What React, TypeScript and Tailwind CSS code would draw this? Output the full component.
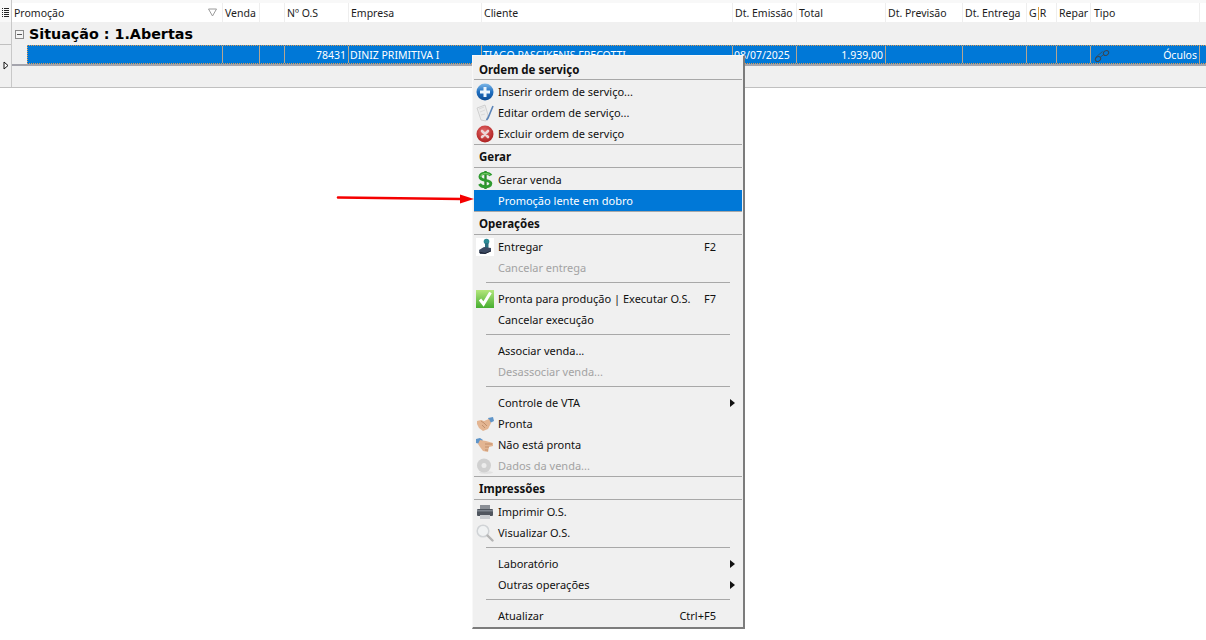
import type { ReactNode } from "react";

const headerCols = "grid grid-cols-[211px_37px_25px_64px_133px_251px_64px_89px_77px_64px_30px_34px_109px_6px]";
const rowCols = "grid grid-cols-[195px_37px_25px_64px_133px_251px_64px_89px_77px_64px_30px_34px_109px_6px]";

function HeaderCell({ children, className = "" }: { children?: ReactNode; className?: string }) {
  return (
    <div className={`flex h-full items-center overflow-hidden whitespace-nowrap border-r border-[#eeeeee] pl-[2px] pt-[2px] ${className}`}>
      {children}
    </div>
  );
}

function DataCell({ children, className = "" }: { children?: ReactNode; className?: string }) {
  return (
    <div className={`flex h-full items-center overflow-hidden whitespace-nowrap border-r border-[#b5a58f] px-[1px] pt-[2px] text-white ${className}`}>
      {children}
    </div>
  );
}

function PlusIcon() {
  return (
    <svg width="18" height="18" viewBox="0 0 18 18">
      <defs>
        <linearGradient id="plusBg" x1="0" y1="0" x2="0" y2="1">
          <stop offset="0" stopColor="#7fb8e8" />
          <stop offset="0.5" stopColor="#1f6fc0" />
          <stop offset="1" stopColor="#0e4c94" />
        </linearGradient>
      </defs>
      <circle cx="9" cy="9" r="8.500" fill="url(#plusBg)" />
      <path d="M7.500 4h3v3.500H14v3h-3.500V14h-3v-3.500H4v-3h3.500z" fill="#eef6fd" />
    </svg>
  );
}

function EditIcon() {
  return (
    <svg width="18" height="18" viewBox="0 0 18 18">
      <path d="M1 4l8-3 3 10-2 6-5-1z" fill="#ececec" stroke="#c8c8c8" strokeWidth="0.8" />
      <path d="M3 5l5-2M4 8l5-2M5 11l4-1" stroke="#d4d4d4" strokeWidth="0.8" />
      <path d="M17 2l-5 12-1.500 2" fill="none" stroke="#5b84b8" strokeWidth="1.600" />
    </svg>
  );
}

function DeleteIcon() {
  return (
    <svg width="18" height="18" viewBox="0 0 18 18">
      <defs>
        <radialGradient id="delBg" cx="0.45" cy="0.35" r="0.7">
          <stop offset="0" stopColor="#e86a6a" />
          <stop offset="1" stopColor="#a81a1a" />
        </radialGradient>
      </defs>
      <circle cx="9" cy="9" r="8.500" fill="url(#delBg)" />
      <path d="M6 6l6 6M12 6l-6 6" stroke="#ecd4d4" strokeWidth="2.600" strokeLinecap="round" />
    </svg>
  );
}

function DollarIcon() {
  return (
    <svg width="18" height="20" viewBox="0 0 18 20">
      <path d="M9.500 1v18" stroke="#2c8a2c" strokeWidth="2.400" />
      <path
        d="M15 5.500c-1-1.500-3-2.300-5.500-2.300-3 0-5.500 1.300-5.500 3.600 0 5 10.800 2.200 10.800 6.700 0 2-2.500 3.300-5.300 3.300-3 0-5-1-6-2.800"
        fill="none"
        stroke="#2f9a30"
        strokeWidth="3"
      />
      <path d="M14.500 5.500c-1-1.200-2.800-1.800-5-1.800-2.600 0-4.800 1-4.800 3" fill="none" stroke="#8fdc7c" strokeWidth="1" />
    </svg>
  );
}

function StampIcon() {
  return (
    <svg width="18" height="18" viewBox="0 0 18 18">
      <rect x="0" y="0" width="18" height="18" fill="#ffffff" />
      <circle cx="10.500" cy="3.500" r="2.800" fill="#2c8a94" />
      <rect x="9" y="5" width="3.500" height="5" fill="#2b6f80" />
      <path d="M3 12l5-3 7 1v3l-6 3H4z" fill="#3c4a62" />
      <path d="M3 14l6 1.500 6-2.500" fill="none" stroke="#1d2434" strokeWidth="1" />
    </svg>
  );
}

function CheckIcon() {
  return (
    <svg width="18" height="18" viewBox="0 0 18 18">
      <defs>
        <linearGradient id="chkBg" x1="0" y1="0" x2="0" y2="1">
          <stop offset="0" stopColor="#b4e67c" />
          <stop offset="1" stopColor="#46ae30" />
        </linearGradient>
      </defs>
      <rect x="0" y="0" width="18" height="18" fill="url(#chkBg)" />
      <path d="M4 9.500l3.500 4.500 7-11.500" fill="none" stroke="#ffffff" strokeWidth="3" />
    </svg>
  );
}

function ShakeIcon() {
  return (
    <svg width="18" height="18" viewBox="0 0 18 18">
      <path d="M12 3l5-1 1 4-4 2z" fill="#5f95c9" />
      <path d="M1 6l4-1 3 1 5-2 2 4-3 6-5 2-4-3-2-4z" fill="#e3b592" />
      <path d="M6 10l3 3M8 8l3 3M5 6l3 2" fill="none" stroke="#bd8a68" strokeWidth="0.9" />
    </svg>
  );
}

function PointIcon() {
  return (
    <svg width="18" height="18" viewBox="0 0 18 18">
      <path d="M0 3l4-1 3 2-3 4-4-1z" fill="#5f95c9" />
      <path d="M4 4l6 1 7 2 0 3-4 1-1 5-5-1-3-4-2-3z" fill="#e3b592" />
      <path d="M9 8h7M9 11h4M9 14h3" fill="none" stroke="#bd8a68" strokeWidth="0.9" />
    </svg>
  );
}

function DiscIcon() {
  return (
    <svg width="18" height="18" viewBox="0 0 18 18">
      <ellipse cx="10" cy="15.500" rx="7" ry="1.500" fill="#e2e2e2" />
      <circle cx="8" cy="8.500" r="7" fill="#d0d0d0" />
      <circle cx="8" cy="8.500" r="2.500" fill="#ececec" />
    </svg>
  );
}

function PrinterIcon() {
  return (
    <svg width="18" height="18" viewBox="0 0 18 18">
      <rect x="4" y="2" width="10" height="5" fill="#8b8f96" />
      <rect x="1" y="6" width="16" height="7" rx="1" fill="#50565f" />
      <rect x="1" y="7" width="16" height="1.500" fill="#7d848e" />
      <rect x="4" y="12" width="10" height="4" fill="#c9ccd0" />
    </svg>
  );
}

function MagnifierIcon() {
  return (
    <svg width="18" height="18" viewBox="0 0 18 18">
      <circle cx="7" cy="7" r="5.800" fill="#f0f2f3" stroke="#d0d3d6" strokeWidth="1.500" />
      <path d="M11.500 11.500l5 5" stroke="#b4b4b4" strokeWidth="2.400" strokeLinecap="round" />
    </svg>
  );
}

function GlassesIcon() {
  return (
    <svg width="16" height="16" viewBox="0 0 16 16">
      <ellipse cx="4" cy="11" rx="2.800" ry="2.200" transform="rotate(-35 4 11)" fill="none" stroke="#3a4650" strokeWidth="1" />
      <ellipse cx="12" cy="5" rx="2.800" ry="2.200" transform="rotate(-35 12 5)" fill="none" stroke="#3a4650" strokeWidth="1" />
      <path d="M6.300 9.200l3.300-2.600M1.500 9.500l7-6" fill="none" stroke="#3a4650" strokeWidth="0.8" />
    </svg>
  );
}

function MenuHeader({ label, first }: { label: string; first?: boolean }) {
  return (
    <div className={`flex h-[25px] flex-col ${first ? "" : "border-t border-[#a8a8a8]"}`}>
      <div className={`flex flex-1 items-center border-b border-[#a8a8a8] pl-[5px] text-[11.500px] font-bold text-[#111111] ${first ? "pt-[4px]" : "pt-[2px]"}`}>
        {label}
      </div>
      <div className="h-[1px]" />
    </div>
  );
}

function MenuRow({
  icon,
  label,
  shortcut,
  submenu,
  disabled,
  active,
}: {
  icon?: ReactNode;
  label: string;
  shortcut?: string;
  submenu?: boolean;
  disabled?: boolean;
  active?: boolean;
}) {
  const color = active ? "bg-[#0078d7] text-white" : disabled ? "text-[#a3a3a3]" : "text-[#111111]";
  return (
    <div className={`relative flex h-[21px] items-center ${color}`}>
      <div className="flex w-[24px] shrink-0 items-center pl-[2px]">{icon}</div>
      <div className="whitespace-nowrap">{label}</div>
      {shortcut && <div className="absolute inset-y-0 right-[26px] flex items-center whitespace-nowrap">{shortcut}</div>}
      {submenu && (
        <div className="absolute right-[7px] top-[7px] h-0 w-0 border-y-[4px] border-l-[5px] border-y-transparent border-l-[#111111]" />
      )}
    </div>
  );
}

function MenuSeparator() {
  return (
    <div className="h-[10px] px-[12px] pt-[4px]">
      <div className="h-[1px] w-full bg-[#a8a8a8]" />
    </div>
  );
}

export default function App() {
  return (
    <div className="relative h-[640px] w-[1206px] overflow-hidden bg-white font-['Noto_Sans',sans-serif] text-[11px] leading-none text-[#1c1c1c]">
      {/* Grid */}
      <div className="flex h-[88px] border-b border-[#c0c0c0] bg-[#f0f0f0] text-[10.500px]">
        <div className="flex w-[12px] shrink-0 flex-col border-r border-[#c8c8c8]">
          <div className="h-[3px] bg-[#f8f8f8]" />
          <div className="flex h-[19px] items-center justify-center bg-[#f8f8f8]">
            <svg width="7" height="9" viewBox="0 0 7 9">
              <path d="M0 0.500h1M0 2.500h1M0 4.500h1M0 6.500h1M0 8.500h1M2 0.500h5M2 2.500h5M2 4.500h5M2 6.500h5M2 8.500h5" stroke="#222222" />
            </svg>
          </div>
          <div className="h-[23px] border-b border-[#c0c0c0]" />
          <div className="flex flex-1 items-start pl-[3px] pt-[16px]">
            <svg width="7" height="9" viewBox="0 0 7 9">
              <path d="M1 1l4 3.500-4 3.500z" fill="#ffffff" stroke="#111111" />
            </svg>
          </div>
        </div>

        <div className="flex min-w-0 flex-1 flex-col">
          <div className="h-[3px] bg-[#f8f8f8]" />
          <div className={`h-[19px] bg-white ${headerCols}`}>
            <HeaderCell className="justify-between pr-[5px]">
              <span>Promoção</span>
              <svg width="9" height="9" viewBox="0 0 9 9" className="-mt-[2px]">
                <path d="M0.500 1h8l-4 7z" fill="none" stroke="#9a9a9a" />
              </svg>
            </HeaderCell>
            <HeaderCell>Venda</HeaderCell>
            <HeaderCell />
            <HeaderCell>Nº O.S</HeaderCell>
            <HeaderCell>Empresa</HeaderCell>
            <HeaderCell>Cliente</HeaderCell>
            <HeaderCell>Dt. Emissão</HeaderCell>
            <HeaderCell>Total</HeaderCell>
            <HeaderCell>Dt. Previsão</HeaderCell>
            <HeaderCell>Dt. Entrega</HeaderCell>
            <HeaderCell>
              G<span className="mx-[1px] h-[13px] w-[1px] bg-[#e0a040]" />R
            </HeaderCell>
            <HeaderCell>Repar</HeaderCell>
            <HeaderCell className="pl-[3px]">Tipo</HeaderCell>
            <div />
          </div>

          <div className="flex h-[23px] items-center pl-[3px] pt-[1px]">
            <div className="flex h-[9px] w-[9px] items-center justify-center border border-[#8a8a8a] bg-[#f4f4f4]">
              <div className="h-[1px] w-[5px] bg-[#555555]" />
            </div>
            <span className="ml-[5px] font-['DejaVu_Sans',sans-serif] text-[14.300px] font-bold text-black">Situação : 1.Abertas</span>
          </div>

          <div className="h-[19px] pl-[15px]">
            <div className={`h-full border-y border-l border-dotted border-[#e09a50] bg-[#0078d7] ${rowCols}`}>
              <DataCell />
              <DataCell />
              <DataCell />
              <DataCell className="justify-end pr-[2px]">78431</DataCell>
              <DataCell>DINIZ PRIMITIVA I</DataCell>
              <DataCell>TIAGO  PASCIKENIS FRECOTTI</DataCell>
              <DataCell>08/07/2025</DataCell>
              <DataCell className="justify-end pr-[2px]">1.939,00</DataCell>
              <DataCell />
              <DataCell />
              <DataCell />
              <DataCell />
              <DataCell className="justify-between pl-[3px] pr-[2px]">
                <GlassesIcon />
                <span>Óculos</span>
              </DataCell>
              <div />
            </div>
          </div>
          <div className="h-[2px] bg-[#a4a4ac]" />
        </div>
      </div>

      {/* Context menu */}
      <div className="absolute left-[472px] top-[55px] flex h-[574px] w-[273px] flex-col border border-r-2 border-b-2 border-[#f8f8f8] border-r-[#7c7c7c] border-b-[#7c7c7c] bg-[#f0f0f0] pl-[1px] pr-[1px] text-[#111111]">
        <MenuHeader label="Ordem de serviço" first />
        <MenuRow icon={<PlusIcon />} label="Inserir ordem de serviço..." />
        <MenuRow icon={<EditIcon />} label="Editar ordem de serviço..." />
        <MenuRow icon={<DeleteIcon />} label="Excluir ordem de serviço" />
        <MenuHeader label="Gerar" />
        <MenuRow icon={<DollarIcon />} label="Gerar venda" />
        <MenuRow label="Promoção lente em dobro" active />
        <MenuHeader label="Operações" />
        <MenuRow icon={<StampIcon />} label="Entregar" shortcut="F2" />
        <MenuRow label="Cancelar entrega" disabled />
        <MenuSeparator />
        <MenuRow icon={<CheckIcon />} label="Pronta para produção | Executar O.S." shortcut="F7" />
        <MenuRow label="Cancelar execução" />
        <MenuSeparator />
        <MenuRow label="Associar venda..." />
        <MenuRow label="Desassociar venda..." disabled />
        <MenuSeparator />
        <MenuRow label="Controle de VTA" submenu />
        <MenuRow icon={<ShakeIcon />} label="Pronta" />
        <MenuRow icon={<PointIcon />} label="Não está pronta" />
        <MenuRow icon={<DiscIcon />} label="Dados da venda..." disabled />
        <MenuHeader label="Impressões" />
        <MenuRow icon={<PrinterIcon />} label="Imprimir O.S." />
        <MenuRow icon={<MagnifierIcon />} label="Visualizar O.S." />
        <MenuSeparator />
        <MenuRow label="Laboratório" submenu />
        <MenuRow label="Outras operações" submenu />
        <MenuSeparator />
        <MenuRow label="Atualizar" shortcut="Ctrl+F5" />
      </div>

      {/* Red arrow annotation */}
      <svg className="absolute left-[336px] top-[190px]" width="140" height="18" viewBox="0 0 140 18">
        <path d="M2 7.500l123 1.500" stroke="#f50000" strokeWidth="2.600" strokeLinecap="round" />
        <path d="M124 4.500l14 4.500-14 4.500z" fill="#f50000" />
      </svg>
    </div>
  );
}
